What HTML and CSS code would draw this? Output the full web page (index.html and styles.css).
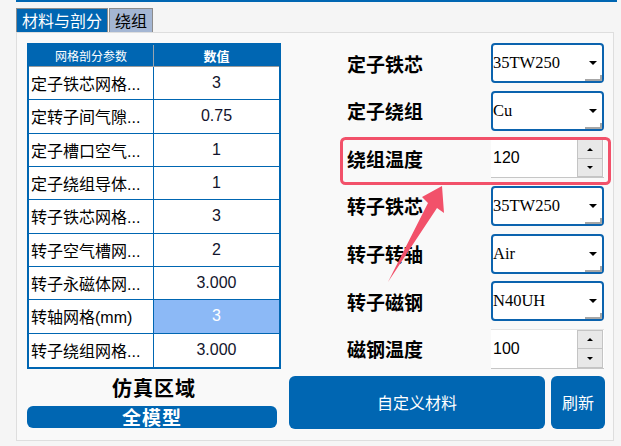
FILE: index.html
```html
<!DOCTYPE html>
<html lang="zh">
<head>
<meta charset="utf-8">
<title>材料与剖分</title>
<link rel="stylesheet" href="styles.css">
</head>
<body>
<div class="topline"></div>
<div class="tabs">
  <div class="tab active">材料与剖分</div>
  <div class="tab">绕组</div>
</div>
<div class="panel">
  <div class="leftcol">
    <div class="grid">
      <div class="th th1">网格剖分参数</div><div class="th th2">数值</div>
      <div class="td name">定子铁芯网格...</div><div class="td val">3</div>
      <div class="td name">定转子间气隙...</div><div class="td val">0.75</div>
      <div class="td name">定子槽口空气...</div><div class="td val">1</div>
      <div class="td name">定子绕组导体...</div><div class="td val">1</div>
      <div class="td name">转子铁芯网格...</div><div class="td val">3</div>
      <div class="td name">转子空气槽网...</div><div class="td val">2</div>
      <div class="td name">转子永磁体网...</div><div class="td val">3.000</div>
      <div class="td name">转轴网格(mm)</div><div class="td val selected">3</div>
      <div class="td name last">转子绕组网格...</div><div class="td val last">3.000</div>
    </div>
    <div class="region">仿真区域</div>
    <button class="btn model">全模型</button>
  </div>
  <div class="rightcol">
    <div class="form">
      <div class="label">定子铁芯</div><div class="select">35TW250</div>
      <div class="label">定子绕组</div><div class="select">Cu</div>
      <div class="label">绕组温度</div><div class="spin"><span class="spinval">120</span><span class="spinbtns"><span class="sb up"></span><span class="sb down"></span></span></div>
      <div class="label">转子铁芯</div><div class="select">35TW250</div>
      <div class="label">转子转轴</div><div class="select">Air</div>
      <div class="label">转子磁钢</div><div class="select">N40UH</div>
      <div class="label">磁钢温度</div><div class="spin"><span class="spinval">100</span><span class="spinbtns"><span class="sb up"></span><span class="sb down"></span></span></div>
    </div>
    <div class="btnrow">
      <button class="btn custom">自定义材料</button>
      <button class="btn refresh">刷新</button>
    </div>
  </div>
</div>
<svg class="annot" width="621" height="446" viewBox="0 0 621 446">
  <rect x="341.5" y="138.5" width="268" height="45" rx="4" fill="none" stroke="#f2516a" stroke-width="3"/>
  <polygon points="442,186 444,213 437,208 388,282 428,203 422,197" fill="#f2516a"/>
</svg>
</body>
</html>
```
FILE: styles.css
```css
* { box-sizing: border-box; }
html, body { margin: 0; padding: 0; }
body {
  width: 621px;
  height: 446px;
  background: #f5f5f5;
  font-family: "Liberation Sans", "Noto Sans CJK SC", sans-serif;
  position: relative;
  overflow: hidden;
}
.topline {
  margin-left: 16px;
  width: 601px;
  height: 2px;
  background: #0066b2;
}
.tabs {
  display: flex;
  gap: 1px;
  margin: 6px 0 0 16px;
}
.tab {
  height: 24px;
  line-height: 22px;
  padding: 0 5px;
  font-size: 16px;
  border: 1px solid #8c8c8c;
  border-bottom: none;
  background: #a4b6d3;
  color: #000;
  font-family: "Noto Sans CJK SC", sans-serif;
}
.tab.active {
  background: #0066b2;
  color: #fff;
}
.panel {
  margin-left: 16px;
  width: 598px;
  background: #f9f9f9;
  border: 1px solid #dedede;
  padding: 10px 8px 11px 10px;
  display: flex;
  gap: 8px;
}
.leftcol {
  width: 254px;
  display: flex;
  flex-direction: column;
}
.grid {
  height: 326px;
  border: 2px solid #0066b2;
  background: #fff;
  display: grid;
  grid-template-columns: 125px 1fr;
  grid-template-rows: 22px repeat(9, 1fr);
}
.th {
  background: #0066b2;
  color: #fff;
  display: flex;
  align-items: center;
  justify-content: center;
  border-bottom: 1px solid #9a9a9a;
  font-family: "Noto Sans CJK SC", sans-serif;
}
.th1 { font-size: 12px; border-right: 1px solid #9aa4ae; }
.th2 { font-size: 13px; font-weight: 700; }
.td {
  display: flex;
  align-items: center;
  font-size: 16px;
  border-bottom: 1px solid #0066b2;
  white-space: nowrap;
  overflow: hidden;
}
.td.last { border-bottom: none; }
.name {
  padding-left: 2px;
  border-right: 1px solid #0066b2;
  color: #000;
}
.val {
  justify-content: center;
  color: #12142c;
}
.val.selected {
  background: #8cb9f6;
  color: #fff;
}
.region {
  margin-top: 8px;
  height: 22px;
  line-height: 22px;
  text-align: center;
  font-size: 20px;
  font-weight: 700;
  letter-spacing: 1px;
  font-family: "Noto Sans CJK SC", serif;
  color: #000;
}
.btn {
  border: none;
  background: #0066b2;
  color: #fff;
  border-radius: 6px;
  font-family: "Noto Sans CJK SC", sans-serif;
  padding: 0;
  margin: 0;
}
.model {
  margin-top: 7px;
  width: 250px;
  height: 22px;
  font-size: 19px;
  font-weight: 700;
  letter-spacing: 1px;
  line-height: 22px;
}
.rightcol {
  width: 316px;
  display: flex;
  flex-direction: column;
}
.form {
  display: grid;
  grid-template-columns: 202px 113px;
  grid-template-rows: repeat(7, 40px);
  row-gap: 7.67px;
}
.label {
  padding-left: 58px;
  display: flex;
  align-items: center;
  font-size: 19px;
  font-weight: 700;
  font-family: "Noto Sans CJK SC", serif;
  color: #000;
}
.select {
  position: relative;
  background: #fff;
  border: 2px solid #0b63ae;
  border-radius: 4px;
  display: flex;
  align-items: center;
  font-family: "Liberation Serif", serif;
  font-size: 16.5px;
  color: #000;
}
.select::after {
  content: "";
  position: absolute;
  right: 5px;
  top: 50%;
  margin-top: -2px;
  border-left: 4px solid transparent;
  border-right: 4px solid transparent;
  border-top: 4px solid #000;
}
.select::before {
  content: "";
  position: absolute;
  right: 0;
  bottom: 0;
  width: 15px;
  height: 4px;
  border-right: 2px solid #a6a6a6;
  border-bottom: 2px solid #a6a6a6;
}
.spin {
  display: flex;
  background: #fff;
  border-top: 1px solid #e4e4e4;
  border-bottom: 1px solid #c6c6c6;
  padding-right: 1px;
}
.spinval {
  flex: 1;
  display: flex;
  align-items: center;
  padding-left: 2px;
  font-size: 16px;
  color: #000;
}
.spinbtns {
  width: 26px;
  display: flex;
  flex-direction: column;
}
.sb {
  flex: 1;
  position: relative;
  background: #e8e8e8;
  border: 1px solid #c4c4c4;
}
.sb + .sb { border-top: none; }
.sb::after {
  content: "";
  position: absolute;
  left: 50%;
  top: 50%;
  margin-left: -3px;
  margin-top: -1.5px;
  border-left: 3px solid transparent;
  border-right: 3px solid transparent;
}
.sb.up::after { border-bottom: 3px solid #000; }
.sb.down::after { border-top: 3px solid #000; }
.btnrow {
  margin-top: 7px;
  display: flex;
  gap: 6px;
}
.custom {
  width: 256px;
  height: 53px;
  font-size: 16px;
}
.refresh {
  width: 54px;
  height: 53px;
  font-size: 16px;
}
.annot {
  position: absolute;
  left: 0;
  top: 0;
  pointer-events: none;
}
```
